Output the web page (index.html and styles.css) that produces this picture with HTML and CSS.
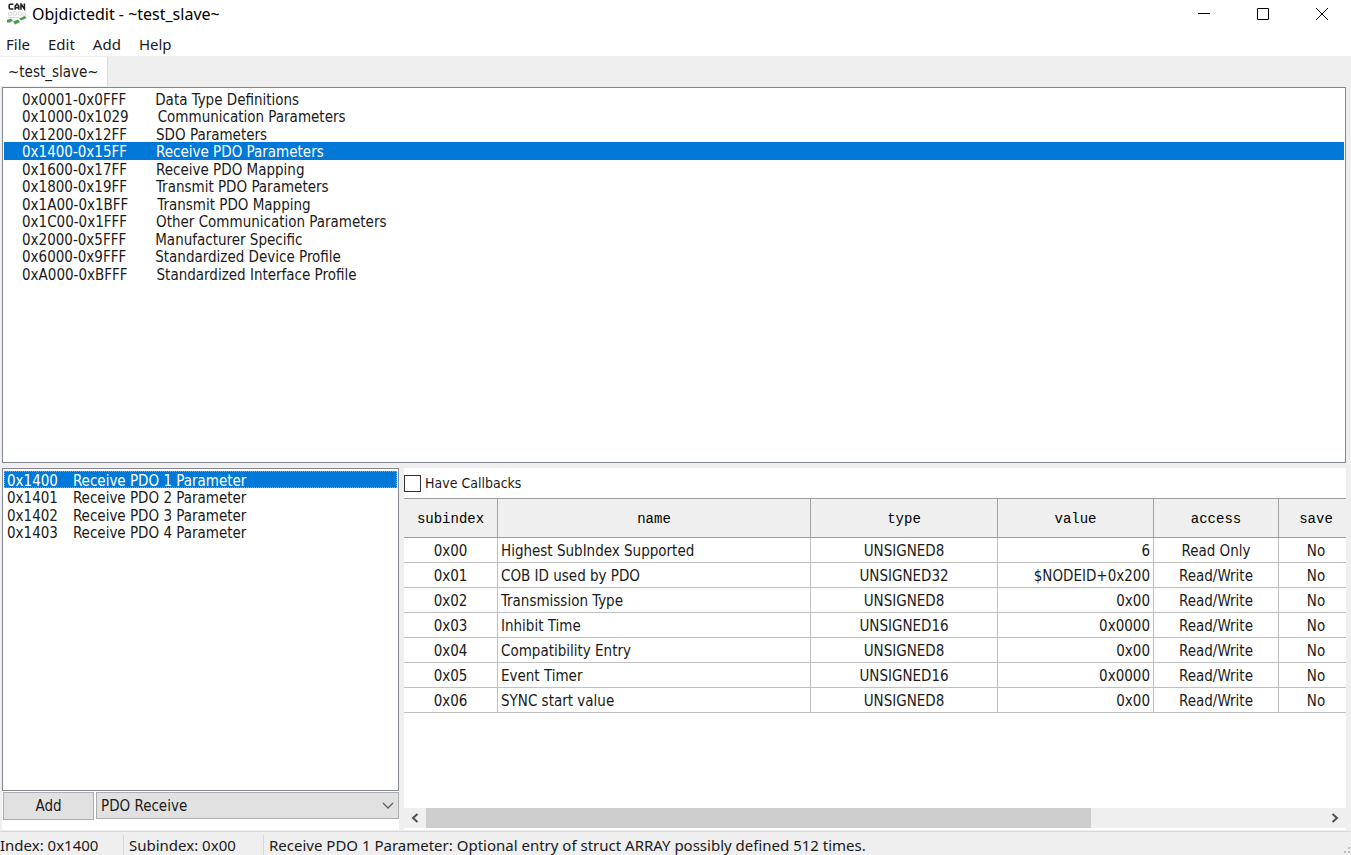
FILE: index.html
```html
<!DOCTYPE html>
<html lang="en">
<head>
  <meta charset="UTF-8" />
  <meta name="viewport" content="width=device-width, initial-scale=1.0"/>
  <title>Objdictedit - ~test_slave~</title>
  <link rel="stylesheet" href="styles.css">
</head>
<body>
  <!-- Title bar -->
  <header class="titlebar">
    <svg class="app-icon" viewBox="0 0 20 22" width="20" height="22">
      <g fill="none" stroke="#222" stroke-width="1.6">
        <path d="M6.4 1.2H3.4Q2.2 1.2 2.2 2.6V4.6Q2.2 6 3.4 6H6.4"/>
        <path d="M8.2 6.8V3L10 1L11.8 3V6.8M8.2 4.6H11.8"/>
        <path d="M14 6.8V1L17.4 6V.4"/>
      </g>
      <g fill="none" stroke="#d3d9d3">
        <circle cx="3" cy="11" r="1.8"/><circle cx="8" cy="10.5" r="1.8"/><circle cx="13" cy="10.5" r="1.8"/><circle cx="17" cy="11.5" r="1.6"/>
        <path d="M1 14.5H12"/>
      </g>
      <path d="M0 17L4 15.5L6 17.5L3 19.5H0ZM6 18.5L11 16.5L13 19L8 21.5ZM12 15.5L18 13L19.5 15L14 17.5Z" fill="#4c9a52"/>
    </svg>
    <span class="title">Objdictedit - ~test_slave~</span>
    <div class="window-buttons">
      <button type="button" aria-label="Minimize"><svg width="12" height="12" viewBox="0 0 12 12"><path d="M0 5.5H12"/></svg></button>
      <button type="button" aria-label="Maximize"><svg width="12" height="12" viewBox="0 0 12 12"><path d="M.5 .5H11.5V11.5H.5Z"/></svg></button>
      <button type="button" aria-label="Close"><svg width="12" height="12" viewBox="0 0 12 12"><path d="M0 0L12 12M12 0L0 12"/></svg></button>
    </div>
  </header>

  <nav class="menubar">
    <button type="button">File</button>
    <button type="button">Edit</button>
    <button type="button">Add</button>
    <button type="button">Help</button>
  </nav>

  <div class="tabs" role="tablist">
    <button type="button" class="tab" role="tab" aria-selected="true">~test_slave~</button>
  </div>

  <main class="page">
    <!-- Profile sections -->
    <ul class="list sections" role="listbox" aria-label="Sections">
      <li role="option"><span class="range">0x0001-0x0FFF</span>Data Type Definitions</li>
      <li role="option"><span class="range">0x1000-0x1029</span>Communication Parameters</li>
      <li role="option"><span class="range">0x1200-0x12FF</span>SDO Parameters</li>
      <li role="option" class="selected" aria-selected="true"><span class="range">0x1400-0x15FF</span>Receive PDO Parameters</li>
      <li role="option"><span class="range">0x1600-0x17FF</span>Receive PDO Mapping</li>
      <li role="option"><span class="range">0x1800-0x19FF</span>Transmit PDO Parameters</li>
      <li role="option"><span class="range">0x1A00-0x1BFF</span>Transmit PDO Mapping</li>
      <li role="option"><span class="range">0x1C00-0x1FFF</span>Other Communication Parameters</li>
      <li role="option"><span class="range">0x2000-0x5FFF</span>Manufacturer Specific</li>
      <li role="option"><span class="range">0x6000-0x9FFF</span>Standardized Device Profile</li>
      <li role="option"><span class="range">0xA000-0xBFFF</span>Standardized Interface Profile</li>
    </ul>

    <div class="bottom">
      <!-- Index list -->
      <section class="indexes">
        <ul class="list" role="listbox" aria-label="Indexes">
          <li role="option" class="selected focused" aria-selected="true"><span class="index">0x1400</span>Receive PDO 1 Parameter</li>
          <li role="option"><span class="index">0x1401</span>Receive PDO 2 Parameter</li>
          <li role="option"><span class="index">0x1402</span>Receive PDO 3 Parameter</li>
          <li role="option"><span class="index">0x1403</span>Receive PDO 4 Parameter</li>
        </ul>
        <div class="add-row">
          <button type="button" class="add">Add</button>
          <div class="choice">
            <select aria-label="Type to add">
              <option>PDO Receive</option>
            </select>
            <svg width="12" height="8" viewBox="0 0 12 8"><path d="M1 1L6 6L11 1"/></svg>
          </div>
        </div>
      </section>

      <!-- Subindex table -->
      <section class="editor">
        <label class="callbacks"><input type="checkbox"> Have Callbacks</label>
        <div class="table-area">
          <table>
            <colgroup>
              <col class="c-subindex"><col class="c-name"><col class="c-type"><col class="c-value"><col class="c-access"><col class="c-save">
            </colgroup>
            <thead>
              <tr><th>subindex</th><th>name</th><th>type</th><th>value</th><th>access</th><th>save</th></tr>
            </thead>
            <tbody>
              <tr><td>0x00</td><td class="left">Highest SubIndex Supported</td><td>UNSIGNED8</td><td class="right">6</td><td>Read Only</td><td>No</td></tr>
              <tr><td>0x01</td><td class="left">COB ID used by PDO</td><td>UNSIGNED32</td><td class="right">$NODEID+0x200</td><td>Read/Write</td><td>No</td></tr>
              <tr><td>0x02</td><td class="left">Transmission Type</td><td>UNSIGNED8</td><td class="right">0x00</td><td>Read/Write</td><td>No</td></tr>
              <tr><td>0x03</td><td class="left">Inhibit Time</td><td>UNSIGNED16</td><td class="right">0x0000</td><td>Read/Write</td><td>No</td></tr>
              <tr><td>0x04</td><td class="left">Compatibility Entry</td><td>UNSIGNED8</td><td class="right">0x00</td><td>Read/Write</td><td>No</td></tr>
              <tr><td>0x05</td><td class="left">Event Timer</td><td>UNSIGNED16</td><td class="right">0x0000</td><td>Read/Write</td><td>No</td></tr>
              <tr><td>0x06</td><td class="left">SYNC start value</td><td>UNSIGNED8</td><td class="right">0x00</td><td>Read/Write</td><td>No</td></tr>
            </tbody>
          </table>
        </div>
        <div class="scrollbar">
          <button type="button" aria-label="Scroll left"><svg width="8" height="10" viewBox="0 0 8 10"><path d="M6.5 1L2 5L6.5 9"/></svg></button>
          <div class="track"><div class="thumb"></div></div>
          <button type="button" aria-label="Scroll right"><svg width="8" height="10" viewBox="0 0 8 10"><path d="M1.5 1L6 5L1.5 9"/></svg></button>
        </div>
      </section>
    </div>
  </main>

  <footer class="statusbar">
    <span class="status-index">Index: 0x1400</span>
    <span class="status-subindex">Subindex: 0x00</span>
    <span class="status-text">Receive PDO 1 Parameter: Optional entry of struct ARRAY possibly defined 512 times.</span>
    <svg class="grip" width="8" height="8" viewBox="0 0 8 8"><path d="M5 0H7V2H5ZM5 4H7V6H5ZM1 4H3V6H1Z" fill="#bfbfbf"/></svg>
  </footer>
</body>
</html>
```
FILE: styles.css
```css
* {
  box-sizing: border-box;
}

body {
  margin: 0;
  height: 100vh;
  display: flex;
  flex-direction: column;
  overflow: hidden;
  background: #fff;
  color: #1a1a1a;
  font-family: "DejaVu Sans Condensed", "Noto Sans", sans-serif;
  font-size: 15px;
}

button,
select {
  margin: 0;
  padding: 0;
  border: none;
  border-radius: 0;
  background: none;
  color: inherit;
  font: inherit;
}

/* Title bar */
.titlebar {
  display: flex;
  align-items: center;
  height: 28px;
  padding-left: 7px;
  color: #000;
  font-family: "Noto Sans", sans-serif;
  font-size: 16px;
}

.title {
  margin-left: 5px;
}

.window-buttons {
  display: flex;
  height: 100%;
  margin-left: auto;
}

.window-buttons button {
  display: flex;
  align-items: center;
  justify-content: center;
  width: 59px;
}

.window-buttons path {
  fill: none;
  stroke: #000;
}

/* Menu */
.menubar {
  display: flex;
  gap: 18px;
  height: 28px;
  padding: 4px 6px 0;
  font-family: "Noto Sans", sans-serif;
}

/* Tabs */
.tabs {
  display: flex;
  height: 30px;
  padding-top: 1px;
  background: #efefef;
}

.tab {
  padding: 0 8px;
  background: #fff;
  border-right: 1px solid #dcdcdc;
}

.page {
  flex: 1;
  display: grid;
  grid-template-rows: 376fr 362fr;
  gap: 5px;
  min-height: 0;
  padding: 1px 5px 1px 2px;
  background: #efefef;
}

/* Lists */
.list {
  margin: 0;
  padding: 2px 1px;
  list-style: none;
  background: #fff;
  border: 1px solid #828790;
  line-height: 20px;
  white-space: nowrap;
  overflow: hidden;
}

.list li {
  height: 18px;
  padding-left: 3px;
}

.list li:nth-child(odd) {
  height: 17px;
}

.list .selected {
  background: #0078d7;
  color: #fff;
}

.list .focused {
  outline: 1px dotted #ff8728;
  outline-offset: -1px;
}

.list.sections li {
  padding-left: 18px;
}

.range {
  margin-right: 29px;
}

.index {
  margin-right: 15px;
}

.bottom {
  display: grid;
  grid-template-columns: 397fr 942fr;
  gap: 5px;
  min-height: 0;
}

/* Index list */
.indexes {
  display: flex;
  flex-direction: column;
  min-width: 0;
  background: #fff;
}

.indexes .list {
  flex: 1;
}

.add-row {
  display: flex;
  gap: 2px;
  padding: 1px 0 10px 1px;
}

.add {
  width: 91px;
  height: 28px;
  background: #e1e1e1;
  border: 1px solid #adadad;
}

.choice {
  position: relative;
  flex: 1;
}

.choice select {
  width: 100%;
  height: 27px;
  padding: 0 4px;
  background: #e1e1e1;
  border: 1px solid #adadad;
  appearance: none;
}

.choice svg {
  position: absolute;
  right: 5px;
  top: 10px;
  pointer-events: none;
}

.choice path {
  fill: none;
  stroke: #606060;
  stroke-width: 1.3;
}

/* Subindex table */
.editor {
  display: flex;
  flex-direction: column;
  min-width: 0;
  padding-bottom: 2px;
  background: #fff;
}

.callbacks {
  display: flex;
  align-items: center;
  gap: 4px;
  height: 30px;
  font-size: 14px;
}

.callbacks input {
  appearance: none;
  width: 17px;
  height: 17px;
  margin: 0;
  background: #fff;
  border: 1px solid #333;
}

.table-area {
  flex: 1;
  overflow: hidden;
}

table {
  width: 950px;
  table-layout: fixed;
  border-collapse: separate;
  border-spacing: 0;
  border-top: 1px solid #a0a0a0;
}

.c-subindex { width: 94px; }
.c-name { width: 313px; }
.c-type { width: 187px; }
.c-value { width: 156px; }
.c-access { width: 125px; }
.c-save { width: 75px; }

th {
  height: 39px;
  padding: 2px 0 0;
  background: #efefef;
  border-right: 1px solid #a0a0a0;
  border-bottom: 1px solid #a0a0a0;
  color: #000;
  font-family: "Liberation Mono", monospace;
  font-size: 14px;
  font-weight: normal;
}

td {
  height: 25px;
  padding: 2px 3px 0;
  border-right: 1px solid #c0c0c0;
  border-bottom: 1px solid #c0c0c0;
  text-align: center;
}

.left {
  text-align: left;
}

.right {
  text-align: right;
}

/* Scrollbar */
.scrollbar {
  display: flex;
  height: 20px;
  background: #efefef;
}

.scrollbar button {
  display: flex;
  align-items: center;
  justify-content: center;
  width: 22px;
}

.scrollbar path {
  fill: none;
  stroke: #505050;
  stroke-width: 2;
}

.track {
  flex: 1;
}

.thumb {
  width: 74%;
  height: 100%;
  background: #cdcdcd;
}

/* Status bar */
.statusbar {
  display: flex;
  align-items: flex-end;
  height: 24px;
  background: #efefef;
  border-top: 1px solid #d7d7d7;
  font-family: "Noto Sans", sans-serif;
  line-height: 20px;
  white-space: nowrap;
}

.status-index {
  width: 124px;
  border-right: 1px solid #d7d7d7;
}

.status-subindex {
  width: 140px;
  padding-left: 5px;
  border-right: 1px solid #d7d7d7;
}

.status-text {
  flex: 1;
  padding-left: 5px;
}
```
